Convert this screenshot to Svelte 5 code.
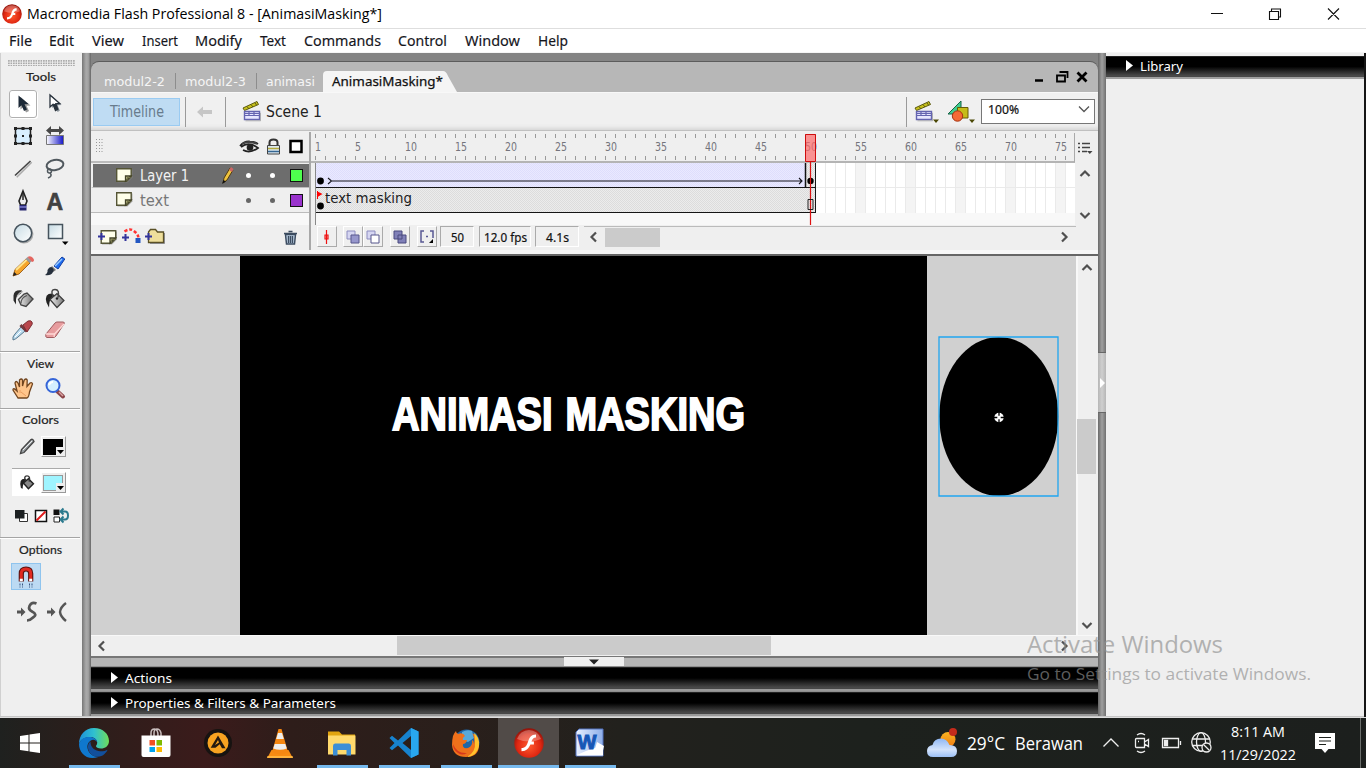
<script>
  const menus = [['File', 23], ['Edit', 25], ['View', 32], ['Insert', 36], ['Modify', 47], ['Text', 26], ['Commands', 77], ['Control', 49], ['Window', 55], ['Help', 30]];
  const tabs = [['modul2-2', 61], ['modul2-3', 61], ['animasi', 49]];
  const tools = ['arrow', 'subarrow', 'transform', 'gradient', 'line', 'lasso', 'pen', 'type', 'oval', 'rect', 'pencil', 'brush', 'ink', 'bucket', 'dropper', 'eraser'];
  const frames = Array.from({ length: 76 }, (_, i) => i);
  const labels = [1, 5, 10, 15, 20, 25, 30, 35, 40, 45, 50, 55, 60, 65, 70, 75];
  const apps = [
    ['edge', true], ['store', false], ['aimp', false], ['vlc', false], ['folder', true],
    ['code', true], ['firefox', true], ['flash', true], ['word', true]
  ];
</script>

{#snippet label(text, w, cls)}
  <svg class="label {cls}" width={w} height="20"><text x="0" y="15" textLength={w} lengthAdjust="spacingAndGlyphs">{text}</text></svg>
{/snippet}

{#snippet flashBall(s)}
  <svg width={s} height={s} viewBox="0 0 30 30">
    <circle cx="15" cy="15" r="14.7" fill="url(#ball)" />
    <path d="M3 11a12.500 12.500 0 0 1 24 0q-12 5-24 0z" fill="#fff" opacity=".28" />
    <path d="M22 6.500c-5 0-6.500 3-7.700 6.500-1.500 4.500-2.800 7-6.800 7v3.200c5 0 7.300-3 8.900-6.700h3.500v-3h-2.400c1-2.700 2-3.800 4.500-3.900z" fill="#fff" />
  </svg>
{/snippet}

{#snippet clapper()}
  <g>
    <path d="M1 7l14-6.500 1.500 3-14 6z" fill="#c8c21c" stroke="#5c5a10" />
    <path d="M5 5.500l2 2.500M9 3.500l2 2.500M13 2l1.500 2" stroke="#5c5a10" />
    <path d="M2.500 10.500h15v8h-15z" fill="#e6e6ff" stroke="#6464b0" stroke-width="1.400" />
    <path d="M2.500 12.500h15M2.500 14.500h15M7 10v4M12 10v4" stroke="#6464b0" stroke-width="1.200" />
    <path d="M3.500 19.800h15v-8" fill="none" stroke="#999" opacity=".7" />
  </g>
{/snippet}

{#snippet page(x, y)}
  <g transform="translate({x} {y})">
    <path d="M1.500 1.500h15v8l-5 5h-10z" fill="#888" opacity=".6" />
    <path d="M.7.7h14.500v8l-4.600 4.600H.7z" fill="#ffffe9" stroke="#555536" stroke-width="1.400" />
    <path d="M9.500 13V8H15z" fill="#c9c992" stroke="#444428" stroke-width="1.300" />
    <path d="M11 12.500V9.500h3.500" fill="none" stroke="#77774a" />
  </g>
{/snippet}

{#snippet tool(name)}
  <svg width="28" height="28" viewBox="-14 -14 28 28" fill="none">
    {#if name === 'arrow'}
      <path d="M-3.500-8v12.500l3-2.700L2 7.500l3-1.500L2.500.8l4-.3z" fill="#999" transform="translate(1 1)" />
      <path d="M-4.500-8.500v12.500l3-2.700L1 7l3-1.500L1.500.3l4-.3z" fill="#1c2937" />
    {:else if name === 'subarrow'}
      <path d="M-4-9v12l3-2.700L1.500 7l2.300-1.200L1.700.2l4-.3z" fill="#8a939b" transform="translate(1 1)" />
      <path d="M-5-9v12l3-2.700L.5 6.500l2.300-1.200L.7-.2l4-.3z" fill="#fff" stroke="#27313b" stroke-width="1.300" />
      <path d="M-2 0L.5 6.500l2.300-1.200L.7-.2l4-.3z" fill="#27313b" />
    {:else if name === 'transform'}
      <path d="M-7.500-7.500h15v15h-15z" fill="#d9efff" stroke="#222" stroke-width="1.500" />
      <path d="M-9-9h3v3h-3zM-1.500-9h3v3h-3zM6-9h3v3h-3zM-9-1.500h3v3h-3zM6-1.500h3v3h-3zM-9 6h3v3h-3zM-1.500 6h3v3h-3zM6 6h3v3h-3zM-1-1h2v2h-2z" fill="#222" />
    {:else if name === 'gradient'}
      <path d="M-9-5.500l5-4.500v3H4v-3l5 4.500L4-1v-3H-4v3z" fill="#484848" />
      <path d="M-8.500-.5h17v9h-17z" fill="url(#blue)" stroke="#777" />
    {:else if name === 'line'}
      <path d="M-7 8L8-7" stroke="#aaa" stroke-width="1.500" transform="translate(.7 .3)" /><path d="M-8 6.500L7.500-8" stroke="#444" stroke-width="1.600" />
    {:else if name === 'lasso'}
      <ellipse cx="0" cy="-4" rx="8.500" ry="5" transform="rotate(-10 0 -4)" stroke="#50585e" stroke-width="2" />
      <circle cx="-5.500" cy="2" r="2" stroke="#50585e" stroke-width="1.500" /><path d="M-5 4q3 3-2 5" stroke="#50585e" stroke-width="1.600" />
    {:else if name === 'pen'}
      <path d="M0-10L4 0 2.500 4h-5L-4 0z" fill="#eee" stroke="#222" stroke-width="1.600" /><path d="M0-9v8" stroke="#222" stroke-width="1.500" />
      <path d="M-3.500 4h7v5.500h-7z" fill="#24246e" /><path d="M-3.500 6h7" stroke="#aaf" />
    {:else if name === 'type'}
      <text x="-8.500" y="9" font-size="23" font-weight="700" fill="#414141" stroke="#414141" stroke-width=".6" font-family="Liberation Sans, sans-serif">A</text>
    {:else if name === 'oval'}
      <circle r="8.700" cx="1" cy="1" stroke="#aaa" stroke-width="1.500" /><circle r="8.700" fill="url(#pale)" stroke="#46535d" stroke-width="1.500" />
    {:else if name === 'rect'}
      <path d="M-6.500-8.500h14v14h-14z" fill="url(#pale)" stroke="#46535d" stroke-width="1.500" /><path d="M7 8.500h6.500L10.200 12z" fill="#000" />
    {:else if name === 'pencil'}
      <path d="M-10 10l2-6.500L3-7 7-3-4 8z" fill="#f5a42a" stroke="#8c4b08" stroke-width=".8" /><path d="M-7 4L4-6.500" stroke="#ffe48c" stroke-width="2" />
      <path d="M2.500-7l2-2 4.500 4-2.300 2z" fill="#999" /><path d="M4.500-9q3-2 5.500 1t-1 4z" fill="#e46660" /><path d="M-10 10l1.200-4 2.700 2.500z" fill="#222" />
    {:else if name === 'brush'}
      <path d="M-1 0L7-9l2.800 2L3 3z" fill="#1e6cf1" stroke="#123da0" /><path d="M0 0L7-7" stroke="#9accff" stroke-width="1.500" />
      <path d="M-3 0l4 4-3 2-3-3z" fill="#777" /><path d="M-4 1q4 2 2 5-2 4-8 3 3-2 2.500-5Q-6 1-4 1z" fill="#26303d" />
    {:else if name === 'ink'}
      <g transform="translate(1 1.500)">
        <path d="M-2-9q-8-1-8.500 5v5l2.500 4V0q0-4 5-6z" fill="#2c2c2c" /><path d="M-7-3q2-4 6-5" stroke="#bbb" stroke-width="1.200" />
        <path d="M-5.500 0L0-5.500l3-1 6 6L2 7l-5-1.500z" fill="url(#steel)" stroke="#444" stroke-width="1.400" /><path d="M-3 4q0-6 6-8" stroke="#555" stroke-width="1.200" />
      </g>
    {:else if name === 'bucket'}
      <g transform="translate(0 1.500)"><path d="M-8.500 3Q-11-6-3-6l3 2q-6 2-6 12z" fill="#222" /><path d="M-5 0L2-6l7 7-7 7z" fill="url(#steel)" stroke="#3a3a3a" stroke-width="1.200" /><path d="M-2-3q-3-7 2-7t3 8" stroke="#444" stroke-width="1.400" /><circle cx="2" cy="-1" r="1.200" fill="#222" /></g>
    {:else if name === 'dropper'}
      <path d="M-10 10q-1-3 2-6l6-7 4 4-7 6q-2 2-5 3z" fill="#bcdcef" stroke="#58788e" /><path d="M-2.500-5L4 1.500" stroke="#74383c" stroke-width="3" />
      <path d="M0-5l5-4q3-1 4 1t-1 4L4 2z" fill="#b9474d" stroke="#7c2e34" /><path d="M-8 7l6-6" stroke="#fff" />
    {:else if name === 'eraser'}
      <path d="M-9 4L0-7q1-1 2-1h6q2 0 1 2L1 6Q0 7.500-2 7.500h-6q-2 0-1-3.500z" fill="#e79c9e" stroke="#a05c60" /><path d="M-9 4h8.500L9-6M-.5 4L-1 7" stroke="#ffd8d6" stroke-width="1.300" />
    {:else if name === 'hand'}
      <path d="M-5 10l-5-8q0-3 4 1l-2-8q1-3 3 0l1.500 4V-8q2-2 3 0v6l1.700-6q2-2 3 0L4-1.500 7-5q2-1 2.500 1L6.500 4Q6 9 4 10z" fill="#ffc58b" stroke="#71451f" stroke-width="1.300" /><path d="M-2 4l5 4M-3 2v3" stroke="#e99c5f" />
    {:else if name === 'zoom'}
      <path d="M2.500 3.500L8 8.500" stroke="#8b4448" stroke-width="4" stroke-linecap="round" /><path d="M4 4l4 4" stroke="#dba3a3" stroke-width="1.500" />
      <circle cx="-2" cy="-2.500" r="6.500" fill="#d5f0ff" stroke="#3565d8" stroke-width="2" /><path d="M-6-3q1-3 4-3" stroke="#fff" stroke-width="2" />
    {:else if name === 'stroke'}
      <path d="M-6.500 7.500l1-4L4-6.500q2-1 3 2L-3 6.500z" fill="#9aa0a4" stroke="#444" stroke-width="1.300" /><path d="M-4 4L5-5" stroke="#eee" />
    {:else if name === 'snapS'}
      <path d="M-10-1.500h4v-3L-1.500 0-6 4.500v-3h-4z" fill="#555" /><path d="M9.500-8.500Q4.500-10.500 2.500-6 1-2.500 5-.5q6 3 1 6-3 3-6 3" stroke="#555" stroke-width="2.700" />
    {:else if name === 'snapC'}
      <path d="M-10-1.500h4v-3L-1.500 0-6 4.500v-3h-4z" fill="#555" /><path d="M9-9Q3.500-5 3 0q.5 4.500 6 9" stroke="#555" stroke-width="2.400" />
    {/if}
  </svg>
{/snippet}

{#snippet chev(rot)}
  <svg width="12" height="12" viewBox="-6 -6 12 12"><path d="M-4.500-2L0 2.500 4.500-2" fill="none" stroke="#505050" stroke-width="2.200" transform="rotate({rot})" /></svg>
{/snippet}

{#snippet app(name)}
  {#if name === 'flash'}
    {@render flashBall(30)}
  {:else}
    <svg width="32" height="32" viewBox="0 0 32 32">
      {#if name === 'edge'}
        <path d="M1 17C1 8 7 1 16 1c9 0 15 6 15 13 0 5-4 7.500-8 7.500-3 0-5-1-5-2.200 0-1 1.200-1.500 1.200-3.800 0-3-3-5.500-7-5.500C7 10 3 12 1 17z" fill="url(#edgeTop)" />
        <path d="M1 17c2-6 6-7 10.500-7 4.500 0 7.700 2.500 7.700 5.500-1-2-3-3-5-2.500-4 1-6 6-4 10.500 2 4 6 6.500 10 6.500C9 34 1 26 1 17z" fill="#0f78ce" />
        <path d="M12.500 14.500c-4 3-3 9.500 1 13 4 3.700 10 2.500 13-.5 1.500-1.500 3-3.500 3-4.300-3 1.700-6 2-9 1.300-5-1.200-8-4-8-9.500z" fill="#124f9c" />
      {:else if name === 'store'}
        <path d="M11 9V6q0-4 3.500-4Q18 2 18 9M14 9V6q0-4 3-4t4 4v3" fill="none" stroke="#c7bcbc" stroke-width="1.500" />
        <path d="M1.500 8.500h29V28q0 2-2 2h-25q-2 0-2-2z" fill="#fff" />
        <path d="M9.500 13H15v5.500H9.500z" fill="#f25022" /><path d="M16.500 13H22v5.500h-5.500z" fill="#7fba00" /><path d="M9.500 20H15v5H9.500z" fill="#00a4ef" /><path d="M16.500 20H22v5h-5.500z" fill="#ffb900" />
      {:else if name === 'aimp'}
        <circle cx="16" cy="16" r="14" fill="#171311" /><circle cx="16" cy="16" r="10.500" fill="#f7a321" />
        <path d="M16 8.500l7.500 12.700H20l-2.300-4-4.200 3.500H8.700zM16 13l-3 5 4-2.500z" fill="#241a10" fill-rule="evenodd" />
      {:else if name === 'vlc'}
        <path d="M7.500 23h17l4 7.500h-25z" fill="#f78b13" /><path d="M16 2h-1.500L8 25q8 4.500 16 0L17.500 2z" fill="#f58712" />
        <path d="M14 6h4l1.800 6h-7.600zM10.700 17h10.600l1.500 4.500Q16 24 9.200 21.500z" fill="#eee" /><path d="M3.500 29h25l.5 2H3z" fill="#ffb33d" />
      {:else if name === 'folder'}
        <path d="M2 4.500h11l3 3h13V12H2z" fill="#e2a510" /><path d="M2 8.500h27.500v19H2z" fill="#ffda6d" />
        <path d="M7 28v-9q0-2.500 2-2.500h14q2 0 2 2.500v9.500h-4.500V23h-9v5.500H7z" fill="#3d8fd6" />
      {:else if name === 'code'}
        <path d="M23 1l7.500 3.500v23L23 31 10 18.500l-6 4.700L1.500 21l5-5-5-5L4 8.800l6 4.700zM23 9l-8.500 7 8.500 7z" fill="#1783cf" fill-rule="evenodd" />
        <path d="M23 1l7.500 3.500v23L23 31z" fill="#29a7ef" />
      {:else if name === 'firefox'}
        <circle cx="16.500" cy="15.500" r="13" fill="#1d66a8" /><path d="M12 5q5-3 10-1l2 7-6 4-6-2z" fill="#58a9d9" />
        <path d="M3 9q1-3 3-5 0 2 2 3 5-2 7 2-3 2-2 4h4q-1 4-4 4-1 5 5 4 5-2 4-8 2 1 2 4 1-7-2-11 7 4 7 12 0 12-13 12T2 18q0-5 1-9z" fill="#ef711b" />
        <path d="M24 6q6 4 5 13-2 10-12 11 9-5 8-15 0-5-1-9z" fill="#ffc32d" /><path d="M3 17q4 10 14 9-5 3-9 0Q3 23 3 17z" fill="#d8381c" />
      {:else if name === 'word'}
        <path d="M5 2h24v27H2V5z" fill="url(#wordBg)" stroke="#5273c0" /><path d="M3 28q10-5 18-7l8-2v9.500H3z" fill="#fff" /><path d="M23 15l7 4-2 9-8-3z" fill="#fff" />
        <text x="3.500" y="21.500" font-family="Liberation Sans, sans-serif" font-weight="700" font-size="21" textLength="19" lengthAdjust="spacingAndGlyphs" fill="#1757b6" stroke="#1757b6">W</text>
      {/if}
    </svg>
  {/if}
{/snippet}

<svg class="defs" width="0" height="0">
  <defs>
    <radialGradient id="ball" cx=".5" cy=".6" r=".6"><stop offset="0" stop-color="#ff5a2e" /><stop offset=".65" stop-color="#e02812" /><stop offset="1" stop-color="#8e120a" /></radialGradient>
    <linearGradient id="blue"><stop offset="0" stop-color="#fff" /><stop offset="1" stop-color="#1515c8" /></linearGradient>
    <linearGradient id="pale" x2="1" y2="1"><stop offset="0" stop-color="#c6dbe4" /><stop offset="1" stop-color="#fff" /></linearGradient>
    <linearGradient id="steel"><stop offset="0" stop-color="#eee" /><stop offset="1" stop-color="#777" /></linearGradient>
    <linearGradient id="edgeTop"><stop offset="0" stop-color="#1d8fd8" /><stop offset=".5" stop-color="#2fc0d0" /><stop offset="1" stop-color="#6fdc5a" /></linearGradient>
    <linearGradient id="wordBg"><stop offset="0" stop-color="#e8f0ff" /><stop offset="1" stop-color="#8eaee8" /></linearGradient>
    <linearGradient id="sun" y2="1" x2="0"><stop offset="0" stop-color="#f9b321" /><stop offset="1" stop-color="#f07c12" /></linearGradient>
    <linearGradient id="cloud" y2="1" x2="0"><stop offset="0" stop-color="#8fb7f4" /><stop offset=".6" stop-color="#d3e3fb" /><stop offset="1" stop-color="#9cc0f5" /></linearGradient>
    <pattern id="tween" width="2" height="2" patternUnits="userSpaceOnUse"><path d="M0 0h2v2H0z" fill="#eae9ff" /><path d="M0 0h1v1H0zM1 1h1v1H1z" fill="#dedefc" /></pattern>
    <pattern id="still" width="2" height="2" patternUnits="userSpaceOnUse"><path d="M0 0h2v2H0z" fill="#ececec" /><path d="M0 0h1v1H0zM1 1h1v1H1z" fill="#dcdcdc" /></pattern>
  </defs>
</svg>

<div class="screen">
  <header class="title">
    {@render flashBall(20)}
    {@render label('Macromedia Flash Professional 8 - [AnimasiMasking*]', 355, 'ttl')}
    <svg class="winbtns" width="132" height="16" viewBox="1210 6 132 16" fill="none" stroke="#111" stroke-width="1.100">
      <path d="M1211 13.500h12M1269.500 11.500h9v8h-9zM1271.500 11.500v-2.500h9v8h-2M1328 8.500l11 11M1339 8.500l-11 11" />
    </svg>
  </header>
  <nav class="menu">
    {#each menus as [m, w]}{@render label(m, w, 'mn')}{/each}
  </nav>

  <main>
    <aside class="tools">
      <div class="grip"></div>
      <div class="cap">{@render label('Tools', 30, 'tl')}</div>
      <div class="toolgrid">
        {#each tools as t}<span class:on={t === 'arrow'}>{@render tool(t)}</span>{/each}
      </div>
      <hr />
      <div class="cap c2">{@render label('View', 27, 'tl')}</div>
      <div class="pair view"><span>{@render tool('hand')}</span><span>{@render tool('zoom')}</span></div>
      <hr />
      <div class="cap c2">{@render label('Colors', 37, 'tl')}</div>
      <div class="color"><span>{@render tool('stroke')}</span><i class="swatch"><b class="blk"></b><svg width="9" height="9"><path d="M0 0h9v9H0z" fill="#efefef" /><path d="M1 3h7L4.500 7z" /></svg></i></div>
      <div class="color fill"><span><svg width="20" height="20" viewBox="-14 -14 28 28"><path d="M-8.500 7Q-12-6-3-6l3 2q-6 2-6 12z" fill="#222" /><path d="M-5 0L2-6l7 7-7 7z" fill="#888" stroke="#222" stroke-width="2" /><path d="M-2-3q-3-7 2-7t3 8" fill="none" stroke="#333" stroke-width="2" /></svg></span><i class="swatch"><b class="cyan"></b><svg width="9" height="9"><path d="M0 0h9v9H0z" fill="#efefef" /><path d="M1 3h7L4.500 7z" /></svg></i></div>
      <svg class="minis" width="58" height="18" viewBox="12 507 58 18" fill="none">
        <path d="M19.500 513.500h8v8h-8z" fill="#fff" stroke="#333" /><path d="M15 510h9.500v8.500H15z" fill="#1c2022" />
        <path d="M35.500 510.500h11v11h-11z" fill="#fff" stroke="#111" stroke-width="1.500" /><path d="M36.500 520.500l9-9" stroke="#e01b1b" stroke-width="2" />
        <path d="M53.500 509.500h6v5.500h-6z" fill="#111" /><path d="M54 517h5.500v5H54z" fill="#fff" stroke="#222" /><path d="M61 511.500h4q3 0 3 4t-3 4h-4M63.500 508.500l-3 3 3 3M63.500 516.500l-3 3 3 3" stroke="#2c7a8e" stroke-width="2" />
      </svg>
      <hr class="h3" />
      <div class="cap c2">{@render label('Options', 43, 'tl')}</div>
      <div class="magnet">
        <svg width="18" height="22" viewBox="0 0 18 22" fill="none"><path d="M4.300 15.500V7.500q0-4.500 4.700-4.500t4.700 4.500v8" stroke="#5a1411" stroke-width="5.200" /><path d="M4.300 15V7.500q0-4.500 4.700-4.500t4.700 4.500V15" stroke="#e02a22" stroke-width="3" /><path d="M2.800 14h3M12.200 14h3" stroke="#fff" stroke-width="2.500" /><path d="M3 17.500v4M5.500 17.500v4M12.500 17.500v4M15 17.500v4" stroke="#375480" stroke-dasharray="2 1" /></svg>
      </div>
      <div class="pair snaps"><span>{@render tool('snapS')}</span><span>{@render tool('snapC')}</span></div>
    </aside>

    <div class="gutter left"></div>

    <section class="doc">
      <div class="tabs">
        {#each tabs as [t, w]}<span class="tab">{@render label(t, w, 'tb')}</span>{/each}
        <span class="active">
          <svg class="shape" width="134" height="21"><path d="M0 21V4q0-4 4-4h116q3 0 5 5l9 16z" fill="#f5f5f5" /></svg>
          {@render label('AnimasiMasking*', 111, 'tba')}
        </span>
        <svg class="mdi" width="56" height="14" viewBox="1033 71 56 14" fill="none" stroke="#000">
          <path d="M1035 81.500h8" stroke-width="2.500" /><path d="M1057 76.500h8v6h-8zM1059.500 73h8v6" stroke-width="1.800" /><path d="M1077.500 73.500l9 9M1086.500 73.500l-9 9" stroke-width="2.800" />
        </svg>
      </div>
      <div class="bar">
        <button class="tlbtn">{@render label('Timeline', 54, 'big')}</button>
        <i class="vr"></i>
        <svg class="back" width="17" height="12"><path d="M1 6l6-5.500V4h9v4H7v3.500z" fill="#c6c6c6" /></svg>
        <i class="vr v2"></i>
        <svg class="clap" width="20" height="22" viewBox="0 0 20 22">{@render clapper()}</svg>
        {@render label('Scene 1', 56, 'big dark')}
        <i class="vr v3"></i>
        <svg class="clap2" width="62" height="24" viewBox="0 0 62 24"><g transform="translate(0 1)">{@render clapper()}</g><path d="M19 19.500h6l-3 3.500zM55 19.500h6l-3 3.500z" fill="#4b4806" />
          <path d="M34 14L47 1v13z" fill="#3fce91" stroke="#176246" /><path d="M43.500 7.500H54v10.500H43.500z" fill="#c6bc18" stroke="#645d09" /><circle cx="43.500" cy="16" r="5.200" fill="#f46a36" stroke="#a33413" /></svg>
        <div class="combo">{@render label('100%', 31, 'sm')}<svg width="12" height="8"><path d="M1 1.500l5 5 5-5" fill="none" stroke="#555" stroke-width="1.300" /></svg></div>
      </div>

      <div class="timeline">
        <div class="layers">
          <div class="lhead">
            <svg width="218" height="31" viewBox="91 132 218 31" fill="none">
              <path d="M96.500 139v14M99.500 139v14M102 139v14" stroke="#999" stroke-dasharray="1 2" />
              <path d="M240 146q4-5 10-4.500 5 0 8 2.500M241 147q8-6 17 1-8 6-15 2" stroke="#222" stroke-width="1.700" /><circle cx="250" cy="147.500" r="3.300" fill="#222" /><path d="M242 144q7-4 15 0" stroke="#444" stroke-width="1.800" />
              <path d="M269.500 146v-3.500q0-3 4-3t4 3v3.500" stroke="#333" stroke-width="2" /><path d="M267.500 145.500h12v8.500h-12z" fill="#dce8ee" stroke="#444" /><path d="M268 148.500h11" stroke="#b4ab3d" stroke-width="1.500" /><path d="M268 151.500h11" stroke="#346693" stroke-width="1.500" />
              <path d="M290.500 141h11v11h-11z" fill="#fff" stroke="#000" stroke-width="2.500" />
            </svg>
          </div>
          <div class="layer sel">
            <svg width="18" height="16">{@render page(1, 0)}</svg>{@render label('Layer 1', 49, 'ly')}
            <svg class="pn" width="12" height="18" viewBox="0 0 12 18"><path d="M1 16l1-5L8 1l3 2-6 10z" fill="#efc33e" stroke="#543d10" /><path d="M7 3l3 2 1.500-3L9 0z" fill="#c66" /><path d="M0 17l1.500-4L4 14.500z" fill="#111" /></svg>
            <i class="dot"></i><i class="dot d2"></i><b class="green"></b>
          </div>
          <div class="layer">
            <svg width="18" height="16">{@render page(1, 0)}</svg>{@render label('text', 29, 'ly gray')}
            <span class="pn nopn"></span>
            <i class="dot"></i><i class="dot d2"></i><b class="purple"></b>
          </div>
          <div class="void"></div>
          <div class="lfoot">
            <svg width="218" height="25" viewBox="91 225 218 25" fill="none">
              {@render page(100.5, 230)}
              <path d="M98 236.500h7M101.500 233v7M122 237.500h7M125.500 234v7" stroke="#33349c" stroke-width="2" />
              <path d="M124.500 231.500q6-4 10 0 4 3 4 7" stroke="#f33" stroke-width="2.500" stroke-dasharray="3 2" /><path d="M135.500 238h5v5h-5z" fill="#2357c2" />
              <path d="M148.500 232l2-2.500h5l2 2.500h6v10.500h-15z" fill="#efdf9c" stroke="#5a5026" stroke-width="1.300" /><path d="M150 243.500h14.500V233" stroke="#888" />
              <path d="M145 236.500h7M148.500 233v7" stroke="#33349c" stroke-width="2" />
              <path d="M285.500 234.500h10l-1 9.500h-8z" fill="#bcd0e4" stroke="#3c4c60" stroke-width="1.500" /><path d="M284 233.500h13M288.500 231.500h4M288.500 236v7M290.500 236v7M292.500 236v7" stroke="#3c4c60" stroke-width="1.400" />
            </svg>
          </div>
        </div>

        <div class="frames">
          <svg class="grid" width="765" height="93" viewBox="311 132 765 93">
            <path d="M311 132h765v31H311z" fill="#efefef" /><path d="M315 163h760v62H315z" fill="#fff" />
            {#each frames as f}
              <path d="M{315.5 + f * 10} 134v4M{315.5 + f * 10} 156v4" stroke="#9a9a9a" />
              {#if f > 49}<path d="M{315.5 + f * 10} 163v50" stroke="#eaeaea" />{/if}
              {#if f > 50 && f % 5 === 4}<path d="M{316 + f * 10} 163h9.500v50h-9.500z" fill="#f4f4f4" />{/if}
            {/each}
            <path d="M815 187.500h260" stroke="#eaeaea" />
            <path d="M311 162h764" stroke="#b4b4b4" stroke-width="2" /><path d="M1074.500 133v29" stroke="#aaa" />
            <path d="M315 213h760v12H315z" fill="#f8f8f8" />
            <path d="M316 163h490v24H316z" fill="url(#tween)" /><path d="M806 163h9v24h-9zM316 188h499v24H316z" fill="url(#still)" />
            <path d="M315.500 187.500h500M315.500 212.500h500M815.500 163v50" stroke="#151515" fill="none" /><path d="M805.500 163v24.500" stroke="#111" stroke-width="1.500" /><path d="M315.500 163v62" stroke="#888" />
            <circle cx="320.500" cy="181" r="3.400" /><circle cx="320.500" cy="206" r="3.400" /><circle cx="810.500" cy="181" r="3.200" />
            <path d="M328 178l3.500 3-3.500 3M332 181h470M799 178l3 3-3 3" fill="none" stroke="#15151c" stroke-width="1.100" />
            <path d="M317.500 191v8" stroke="red" /><path d="M317.500 191.500l5 2.500-5 3z" fill="red" />
            <text class="ft" x="325" y="202.500" textLength="87" lengthAdjust="spacingAndGlyphs">text masking</text>
            {#each labels as n}
              <text class="num" x={n === 1 ? 315 : 315 + (n - 1) * 10} y="151" textLength={n < 10 ? 6 : 12} lengthAdjust="spacingAndGlyphs">{n}</text>
            {/each}
            <path d="M805.500 134.500h10v27h-10z" fill="#ff6a6a" fill-opacity=".7" stroke="#cf0d0d" /><path d="M810.500 162v63" stroke="#dd1111" stroke-width="1.200" />
            <path d="M808 199.500h5v10h-5z" fill="none" stroke="#222" />
          </svg>
          <div class="ffoot">
            <span class="fb"><svg width="14" height="16" viewBox="-7 -8 14 16"><path d="M-.5-7V7M-2-2h3v4h-3z" fill="none" stroke="#e11" stroke-width="1.200" /></svg></span>
            <span class="fb g6"><svg width="14" height="14"><path d="M1 1h8v8H1z" fill="#d6d6f2" stroke="#8c8cc0" /><path d="M5 5h8v8H5z" fill="#9696cc" stroke="#57578c" /></svg></span>
            <span class="fb"><svg width="14" height="14"><path d="M1 1h8v8H1z" fill="#d6d6f2" stroke="#8c8cc0" /><path d="M5 5h8v8H5z" fill="#fff" stroke="#57578c" /></svg></span>
            <span class="fb g7"><svg width="14" height="14"><path d="M1 1h8v8H1zM5 5h8v8H5z" fill="#8080b8" stroke="#49497e" /></svg></span>
            <span class="fb g7"><svg width="14" height="14" fill="none" stroke="#5a5a94" stroke-width="1.500"><path d="M4 1H1v11h3M10 1h3v7M6 6.500h2" /><path d="M13 9v4H9z" fill="#000" stroke="none" /></svg></span>
            <span class="fld w1">{@render label('50', 13, 'sm')}</span>
            <span class="fld w2">{@render label('12.0 fps', 43, 'sm')}</span>
            <span class="fld w3">{@render label('4.1s', 23, 'sm')}</span>
            <span class="fscroll">{@render chev(90)}<i></i><em></em>{@render chev(-90)}</span>
          </div>
        </div>

        <div class="tright">
          <svg width="16" height="14" viewBox="1077 141 16 14" fill="none" stroke="#444"><path d="M1078 143.500h2M1078 147.500h2M1078 151.500h2M1082 143.500h8M1082 147.500h8M1082 151.500h5" stroke-width="1.600" /><path d="M1087 151h5.500l-2.700 3z" fill="#444" stroke="none" /></svg>
          <span class="up">{@render chev(180)}</span>
          <span class="dn">{@render chev(0)}</span>
        </div>
      </div>

      <div class="work">
        <div class="canvas">
          <svg width="985" height="379" viewBox="91 256 985 379">
            <path d="M240 256h687v379H240z" />
            <text class="mask" x="392" y="430" textLength="353" lengthAdjust="spacingAndGlyphs">ANIMASI MASKING</text>
            <ellipse cx="998.800" cy="416.500" rx="59.500" ry="79.500" />
            <path d="M939 337h119v159H939z" fill="none" stroke="#21a5ef" stroke-width="1.300" />
            <circle cx="999" cy="417.500" r="4.700" fill="#fff" /><path d="M999 415.800v-4M999 419.200v4M997.300 417.500h-4M1000.700 417.500h4" stroke="#000" stroke-width="1.300" />
          </svg>
        </div>
        <div class="vscroll">{@render chev(180)}<i></i>{@render chev(0)}</div>
      </div>
      <div class="hscroll">{@render chev(90)}<i></i>{@render chev(-90)}</div>
      <div class="split"><span><svg width="10" height="6"><path d="M0 .5h10L5 5.500z" fill="#222" /></svg></span></div>
      <div class="pbar"><svg width="8" height="12"><path d="M0 0l7 5.500L0 11z" fill="#fff" /></svg>{@render label('Actions', 47, 'pb')}</div>
      <div class="pbar"><svg width="8" height="12"><path d="M0 0l7 5.500L0 11z" fill="#fff" /></svg>{@render label('Properties & Filters & Parameters', 211, 'pb')}</div>
    </section>

    <div class="gutter right"><span><svg width="6" height="12"><path d="M0 1l5 5-5 5z" fill="#fff" /></svg></span></div>

    <aside class="lib">
      <div class="pbar lb"><svg width="8" height="12"><path d="M0 0l7 5.500L0 11z" fill="#fff" /></svg>{@render label('Library', 43, 'pb')}</div>
    </aside>
  </main>

  <div class="wm">
    {@render label('Activate Windows', 196, 'w24')}
    {@render label('Go to Settings to activate Windows.', 284, 'w18')}
  </div>

  <footer>
    <span class="start"><svg width="20" height="20"><path d="M0 3l8.500-1.300v7.800H0zM9.500 1.500L20 0v9.500H9.500zM0 10.500h8.500v7.800L0 17zM9.500 10.500H20V20L9.500 18.500z" fill="#fff" /></svg></span>
    {#each apps as [a, open]}
      <span class="app" class:open class:cur={a === 'flash'}>{@render app(a)}</span>
    {/each}
    <div class="tray">
      <svg width="32" height="30" viewBox="0 0 32 30"><circle cx="22" cy="11.500" r="7.500" fill="url(#sun)" /><circle cx="27" cy="4" r="4" fill="#c42b1c" /><path d="M7 29q-6 0-6-6 0-5 5.500-6Q8 10.500 15 10.500q6 0 8.500 6.500Q31 17 31 23t-6 6z" fill="url(#cloud)" /></svg>
      {@render label('29°C', 38, 'wt m1')}
      {@render label('Berawan', 68, 'wt m2')}
      <svg class="sys" width="112" height="26" viewBox="1100 731 112 26" fill="none" stroke="#eee" stroke-width="1.300">
        <path d="M1103.500 747.500l7.500-7.500 7.500 7.500" />
        <path d="M1136.500 739.500h8v9h-8q-1 0-1-1v-7q0-1 1-1zM1144.500 743l4-2.500v7l-4-2.500M1137 736q4-3 8 0M1137 752q4 3 8 0M1138 742.500h1" />
        <path d="M1162.500 739.500h16v9h-16zM1180.500 742v4" /><path d="M1164.500 741.500h3v5h-3z" fill="#eee" />
        <circle cx="1201" cy="743" r="9.300" /><ellipse cx="1201" cy="743" rx="4.500" ry="9.300" /><path d="M1192 740h18M1192 746.500h13" /><circle cx="1206.500" cy="748.500" r="4.500" fill="#1d211d" /><path d="M1203.500 745.500l6 6" />
      </svg>
      <div class="clock">{@render label('8:11 AM', 54, 'ck')}{@render label('11/29/2022', 76, 'ck')}</div>
      <svg class="note" width="20" height="20"><path d="M0 0h20v16h-6.500L10 20l-3.500-4H0z" fill="#fff" /><path d="M4 4.500h12M4 8h12M4 11.500h7" stroke="#1d211d" /></svg>
    </div>
  </footer>
</div>

<style>
  :global(body) { margin: 0; overflow: hidden; }
  .defs { position: absolute; }
  svg { display: block; flex: none; }
  .screen { position: relative; width: 1366px; height: 768px; display: flex; flex-direction: column; background: #efefef; }
  .label { overflow: visible; font-family: "Noto Sans", "Open Sans", sans-serif; font-size: 13px; fill: #111; }
  .ttl { font-size: 14.500px; font-family: "Open Sans", sans-serif; fill: #000; }
  .mn { font-size: 14px; fill: #15151c; stroke: #15151c; stroke-width: .15; }
  .tl { font-size: 12px; fill: #222; stroke: #222; stroke-width: .2; font-family: Lato, sans-serif; }
  .tb, .tba { font-family: "DejaVu Sans Condensed", "DejaVu Sans", sans-serif; font-size: 12.500px; fill: #f5f5f5; }
  .tba { font-family: "Noto Sans", sans-serif; font-size: 13px; fill: #111; stroke: #111; stroke-width: .25; }
  .big { font-family: "DejaVu Sans Condensed", "DejaVu Sans", sans-serif; font-size: 15px; fill: #687b8c; }
  .dark { fill: #222; }
  .sm { font-size: 12px; stroke: #111; stroke-width: .2; }
  .ly { font-family: "DejaVu Sans Condensed", "DejaVu Sans", sans-serif; font-size: 15px; fill: #f2f2f2; }
  .gray { fill: #777; }
  .pb { font-size: 12.500px; fill: #fff; }
  .ck { font-family: "Open Sans", sans-serif; font-size: 14.500px; fill: #fff; }
  .wt { font-family: "Open Sans", sans-serif; font-size: 17.500px; fill: #fff; position: relative; top: 2px; }
  .num { font-family: "DejaVu Sans Condensed", "DejaVu Sans", sans-serif; font-size: 11.500px; fill: #74747c; }
  .ft { font-family: "DejaVu Sans Condensed", "DejaVu Sans", sans-serif; font-size: 14px; fill: #1c1c22; }
  .mask { font-family: "Liberation Sans Narrow", "Liberation Sans", sans-serif; font-weight: 700; font-size: 46px; word-spacing: 3px; fill: #fff; stroke: #fff; stroke-width: 1.900; }

  .title { height: 28px; background: #fff; display: flex; align-items: center; padding: 0 24px 0 2px; border-bottom: 1px solid #dedede; }
  .title .ttl { margin-left: 5px; }
  .winbtns { margin-left: auto; }
  .menu { height: 24px; box-sizing: border-box; background: #fff; border-bottom: 1px solid #f5f5f5; display: flex; gap: 17.700px; padding: 2px 0 0 8.500px; }

  main { height: 663px; display: flex; border-bottom: 1px solid #c6c6c6; background: #efefef; width: 1364px; box-shadow: 2px 0 #151515; }
  .tools { width: 82px; box-sizing: border-box; background: #efefef; box-shadow: inset 1px 0 #d0d0d0; display: flex; flex-direction: column; }
  .grip { margin: 7px 0 0 8px; width: 67px; height: 6px; background: radial-gradient(circle at 1px 1px, #a8a8a8 .8px, transparent 1px) 0 0 / 2.500px 2.500px; }
  .cap { display: flex; justify-content: center; width: 81px; height: 22px; }
  .toolgrid { display: grid; grid-template-columns: 32px 32px; grid-auto-rows: 32.300px; padding-left: 7px; height: 263px; box-sizing: border-box; }
  .toolgrid span { display: grid; place-items: center; }
  .toolgrid .on svg { background: #fff; outline: 1px solid #b0b0b0; outline-offset: -1px; border-radius: 3px; box-shadow: 1px 1px #fff; }
  hr { width: 80px; height: 0; margin: 0; border: 0; border-top: 1px solid #a5a5a5; border-bottom: 1px solid #fff; box-sizing: content-box; flex: none; }
  .c2 { height: 20px; }
  .pair { display: flex; padding-left: 9px; gap: 4px; }
  .view { height: 35px; }
  .view span { margin-top: 1px; }
  .view + hr + .c2 { margin-top: -1px; }
  .color { display: flex; align-items: center; margin-left: 12px; width: 58px; height: 28px; margin-top: 3px; }
  .color.fill { background: #fff; border-top: 1px solid #aaa; box-sizing: border-box; margin-top: 8px; }
  .color span { width: 29px; display: grid; place-items: center; }
  .swatch { position: relative; width: 25px; height: 21px; border: 1px solid #fff; border-right-color: #999; border-bottom-color: #999; background: #efefef; box-sizing: border-box; display: block; }
  .swatch b { display: block; margin: 2px 1px; width: 20px; height: 16px; }
  .swatch svg { position: absolute; right: 0; bottom: 0; }
  .blk { background: #000; }
  .cyan { background: #9ff4ff; outline: 1px solid #999; outline-offset: -1px; }
  .minis { margin: 11px 0 0 12px; }
  .h3 { margin-top: 12px; }
  .magnet { width: 28px; height: 25px; margin: 4px 0 0 11px; border: 1px solid #8fc4ee; background: #bcdaf3; display: grid; place-items: center; flex: none; }
  .snaps { margin-top: 8px; padding-left: 13px; gap: 2px; }

  .gutter { width: 9px; background: linear-gradient(90deg, #777, #aaa 45%, #a2a2a2 70%, #666); }
  .gutter.right { width: 8px; background: linear-gradient(90deg, #686868, #a0a0a0 50%, #707070); padding-top: 299px; box-sizing: border-box; }
  .gutter.right span { display: flex; align-items: center; height: 61px; background: linear-gradient(90deg, #b6b6b6, #cfcfcf, #b6b6b6); padding-left: 2px; border-top: 1px solid #666; border-bottom: 1px solid #666; box-sizing: border-box; }

  .doc { width: 1007px; box-sizing: border-box; background: #848484; padding-top: 9px; display: flex; flex-direction: column; }
  .tabs { height: 30px; background: #b7b7b7; border-radius: 8px 8px 0 0; display: flex; box-shadow: 0 -1px #5c5c5c; flex: none; }
  .tab { padding: 9px 11px 0 9px; height: 21px; position: relative; box-sizing: border-box; }
  .tab:first-child { padding-left: 13px; }
  .tab::after { content: ""; position: absolute; right: 0; top: 11px; height: 16px; width: 1px; background: #8d8d8d; }
  .tab:nth-child(3)::after { display: none; }
  .tab:nth-child(3) { padding-right: 8px; }
  .active { position: relative; padding: 9px 0 0 9px; }
  .shape { position: absolute; left: 0; top: 9px; }
  .active .label { position: relative; }
  .mdi { margin: 8px 9px 0 auto; }
  .bar { height: 39px; background: #f0f0f0; border-top: 1px solid #f8f8f8; border-bottom: 1px solid #c0c0c0; display: flex; align-items: center; padding: 1px 3px 0 2px; box-sizing: border-box; box-shadow: inset 0 -5px 4px -3px #d5d5d5; }
  .tlbtn { width: 87px; height: 28px; background: #bfdcf3; border: 1px solid #9acbf2; padding: 0; display: flex; justify-content: center; align-items: center; }
  .vr { width: 1px; height: 30px; background: #9a9a9a; margin-left: 5px; }
  .v2 { margin-left: 12px; }
  .v3 { margin-left: auto; }
  .back { margin-left: 10px; }
  .clap { margin-left: 16px; }
  .dark { margin-left: 4px; }
  .clap2 { margin-left: 7px; }
  .combo { margin-left: 5px; width: 114px; height: 25px; border: 1px solid #777; background: #fff; box-sizing: border-box; display: flex; align-items: center; justify-content: space-between; padding: 0 4px 4px 6px; position: relative; top: -1px; }

  .timeline { height: 125px; background: #efefef; border-bottom: 2px solid #666; box-sizing: border-box; display: flex; padding-top: 1px; box-shadow: inset 0 -4px #f7f7f7; position: relative; }
  .layers { width: 218px; border-right: 2px solid #a8a8a8; height: 118px; box-sizing: content-box; }
  .lhead { height: 29px; border-bottom: 2px solid #bbb; overflow: hidden; }
  .layer { height: 25px; display: flex; align-items: center; border-bottom: 1px solid #bbb; box-sizing: border-box; padding: 0 0 0 24px; }
  .sel { background: #6d6d6d; border-left: 2px solid #efefef; padding-left: 22px; border-top: 1px solid #efefef; }
  .layer .label { margin: 1px 0 0 7px; width: 82px; }
  .pn { width: 12px; }
  .dot { width: 5px; height: 5px; border-radius: 50%; background: #666; margin-left: 12px; }
  .sel .dot { background: #fff; }
  .d2 { margin-left: 19px; }
  .layer b { width: 11px; height: 11px; border: 1.500px solid #111; margin-left: 15px; }
  .green { background: #4eff4e; }
  .purple { background: #9933cc; }
  .void { height: 12px; background: #f8f8f8; }
  .frames { width: 765px; }
  .ffoot { height: 25px; display: flex; padding: 1px 0 0 6px; }
  .fb { width: 20px; height: 21px; box-sizing: border-box; border: 1px solid #fff; border-right-color: #aaa; border-bottom-color: #aaa; display: grid; place-items: center; }
  .g6 { margin-left: 6px; } .g7 { margin-left: 7px; }
  .fld { height: 21px; box-sizing: border-box; border: 1px solid #aaa; border-right-color: #fff; border-bottom-color: #fff; display: grid; place-items: center; margin-left: 5px; }
  .w1 { width: 34px; margin-left: 3px; } .w2 { width: 52px; } .w3 { width: 44px; margin-left: 4px; }
  .fscroll { flex: 1; display: flex; align-items: center; height: 20px; margin-left: 5px; border-top: 1px solid #bbb; padding: 0 6px 0 4px; }
  .fscroll i { width: 55px; height: 19px; background: #cbcbcb; margin-left: 5px; }
  .fscroll em { flex: 1; }
  .tright { width: 22px; height: 93px; display: flex; flex-direction: column; align-items: center; padding-top: 9px; box-sizing: border-box; }
  .tright svg { margin-right: 4px; }
  .up { margin-top: 13px; } .dn { margin-top: 29px; }

  .work { height: 379px; display: flex; background: #efefef; }
  .canvas { width: 985px; background: #d0d0d0; }
  .vscroll { width: 20px; border-left: 2px solid #f8f8f8; display: flex; flex-direction: column; align-items: center; padding: 6px 1px 4px 0; box-sizing: border-box; }
  .vscroll i { width: 19px; height: 55px; margin: 145px 0 145px; background: #cbcbcb; flex: none; }
  .hscroll { height: 23px; box-sizing: border-box; background: #efefef; border-top: 1px solid #f8f8f8; border-bottom: 2px solid #777; display: flex; align-items: center; padding: 0 0 1px 5px; }
  .hscroll i { width: 374px; height: 19px; background: #cbcbcb; margin: 0 287px 0 289px; }
  .split { height: 8px; background: #b5b5b5; position: relative; z-index: 1; }
  .split span { display: grid; place-items: center; width: 60px; height: 9px; margin-left: 472.500px; background: #efefef; position: relative; top: -1px; }
  .pbar { height: 25px; box-sizing: border-box; background: linear-gradient(#000 50%, #484848 92%); border-top: 1px solid #8e8e8e; border-bottom: 2px solid #999; box-shadow: inset 0 1px #222; display: flex; align-items: center; padding-left: 20px; gap: 6px; flex: none; }
  .lib { width: 258px; padding-top: 3px; }
  .lb { height: 23px; padding-left: 20px; padding-bottom: 1px; border-top: 0; border-bottom-color: #a0a0a0; }

  .wm { position: absolute; left: 1027px; top: 638px; z-index: 3; display: grid; gap: 7px; }
  .w24 { font-family: "Open Sans", sans-serif; font-size: 24px; fill: #8f8f8f; opacity: .65; }
  .w18 { font-family: "Open Sans", sans-serif; font-size: 17px; fill: #8f8f8f; opacity: .65; }

  footer { height: 51px; background: linear-gradient(90deg, #1f211f 0, #2c1e1b 90px, #3b1b1b 205px, #2e1d1a 290px, #2a1f1b 450px, #22211d 620px, #1d211d 860px, #1c1f1d); border-top: 1px solid #ddd; box-sizing: border-box; display: flex; }
  .start { width: 60px; margin-right: 3px; display: grid; place-items: center; }
  .app { width: 62px; display: grid; place-items: center; position: relative; padding-bottom: 1px; box-sizing: border-box; }
  .open::after { content: ""; position: absolute; left: 6px; right: 5px; bottom: 0; height: 3px; background: #76b9ed; }
  .cur { background: #514b48; width: 61px; margin: 0 0 0 1px; }
  .cur::after { left: 0; right: 0; }
  .tray { margin-left: auto; width: 435px; display: flex; align-items: center; border-right: 1px solid #6b6e6b; margin-right: 5px; box-sizing: border-box; }
  .m1 { margin-left: 9px; } .m2 { margin-left: 10px; }
  .sys { margin-left: 17px; }
  .clock { width: 78px; margin-left: 7px; display: grid; justify-items: center; gap: 3px; }
  .note { margin-left: 18px; }
</style>
